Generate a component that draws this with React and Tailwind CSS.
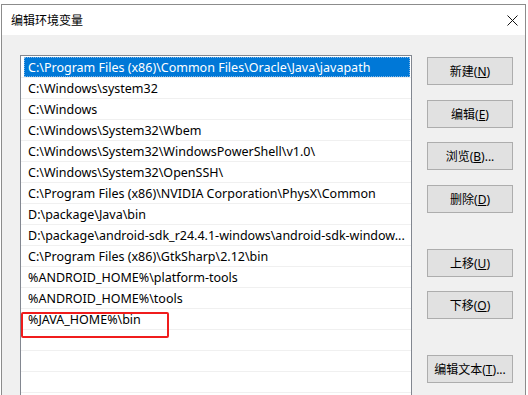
const paths = [
  'C:\\Program Files (x86)\\Common Files\\Oracle\\Java\\javapath',
  'C:\\Windows\\system32',
  'C:\\Windows',
  'C:\\Windows\\System32\\Wbem',
  'C:\\Windows\\System32\\WindowsPowerShell\\v1.0\\',
  'C:\\Windows\\System32\\OpenSSH\\',
  'C:\\Program Files (x86)\\NVIDIA Corporation\\PhysX\\Common',
  'D:\\package\\Java\\bin',
  'D:\\package\\android-sdk_r24.4.1-windows\\android-sdk-window...',
  'C:\\Program Files (x86)\\GtkSharp\\2.12\\bin',
  '%ANDROID_HOME%\\platform-tools',
  '%ANDROID_HOME%\\tools',
  '%JAVA_HOME%\\bin',
  '',
  '',
  '',
]

const buttons = [
  { label: '新建', key: 'N', gap: 'mt-0' },
  { label: '编辑', key: 'E', gap: 'mt-[15px]' },
  { label: '浏览', key: 'B', tail: '...', gap: 'mt-[14px]' },
  { label: '删除', key: 'D', gap: 'mt-[15px]' },
  { label: '上移', key: 'U', gap: 'mt-[36px]' },
  { label: '下移', key: 'O', gap: 'mt-[14px]' },
  { label: '编辑文本', key: 'T', tail: '...', gap: 'mt-[36px]' },
]

function CloseIcon() {
  return (
    <svg width="11" height="11" viewBox="0 0 11 11" className="block">
      <path d="M0.5 0.5 L10.5 10.5 M10.5 0.5 L0.5 10.5" stroke="#111" strokeWidth="1" fill="none" />
    </svg>
  )
}

export default function App() {
  return (
    <div
      className="relative h-[395px] w-[528px] overflow-hidden bg-white text-[12px] text-black"
      style={{ fontFamily: '"Noto Sans", "Noto Sans CJK SC", sans-serif' }}
    >
      <div className="h-[4px] bg-white" />
      <div className="ml-[1px] flex h-[391px] w-[525px] flex-col overflow-hidden border border-b-0 border-[#8c8c8c]">
        <div className="flex h-[30px] shrink-0 items-center justify-between bg-white pl-[9px] pr-[7px]">
          <span className="pt-px text-[12px] leading-none">编辑环境变量</span>
          <CloseIcon />
        </div>

        <div className="flex min-h-0 flex-1 bg-[#f0f0f0] pl-[18px] pt-[20px]">
          <div className="h-[400px] w-[392px] shrink-0 border border-[#828790] bg-white pt-px text-[12.5px]">
            {paths.map((p, i) =>
              i === 0 ? (
                <div key={i} className="flex h-[21px] items-center border-b border-[#f0f0f0]">
                  <div className="ml-[3px] mr-px flex h-[20px] flex-1 items-center bg-[#0078d7] pl-[4px] pt-[2px] text-white outline outline-1 outline-dotted outline-offset-[-1px] outline-[#7fb7e8]">
                    <span className="whitespace-nowrap">{p}</span>
                  </div>
                </div>
              ) : (
                <div key={i} className="flex h-[21px] items-center overflow-hidden whitespace-nowrap border-b border-[#f0f0f0] pl-[7px] pt-[2px]">
                  {p}
                </div>
              ),
            )}
          </div>

          <div className="ml-[15px] flex flex-col pt-[2px]">
            {buttons.map((b) => (
              <div
                key={b.key}
                className={`flex h-[28px] w-[86px] shrink-0 items-center justify-center border border-[#adadad] bg-[#e1e1e1] pt-px ${b.gap}`}
              >
                <span>
                  {b.label}(<span className="underline">{b.key}</span>){b.tail || ''}
                </span>
              </div>
            ))}
          </div>
        </div>
      </div>

      <div className="absolute left-[21px] top-[312px] h-[26px] w-[148px] rounded-[2px] border-2 border-[#f01c1c]" />
    </div>
  )
}
